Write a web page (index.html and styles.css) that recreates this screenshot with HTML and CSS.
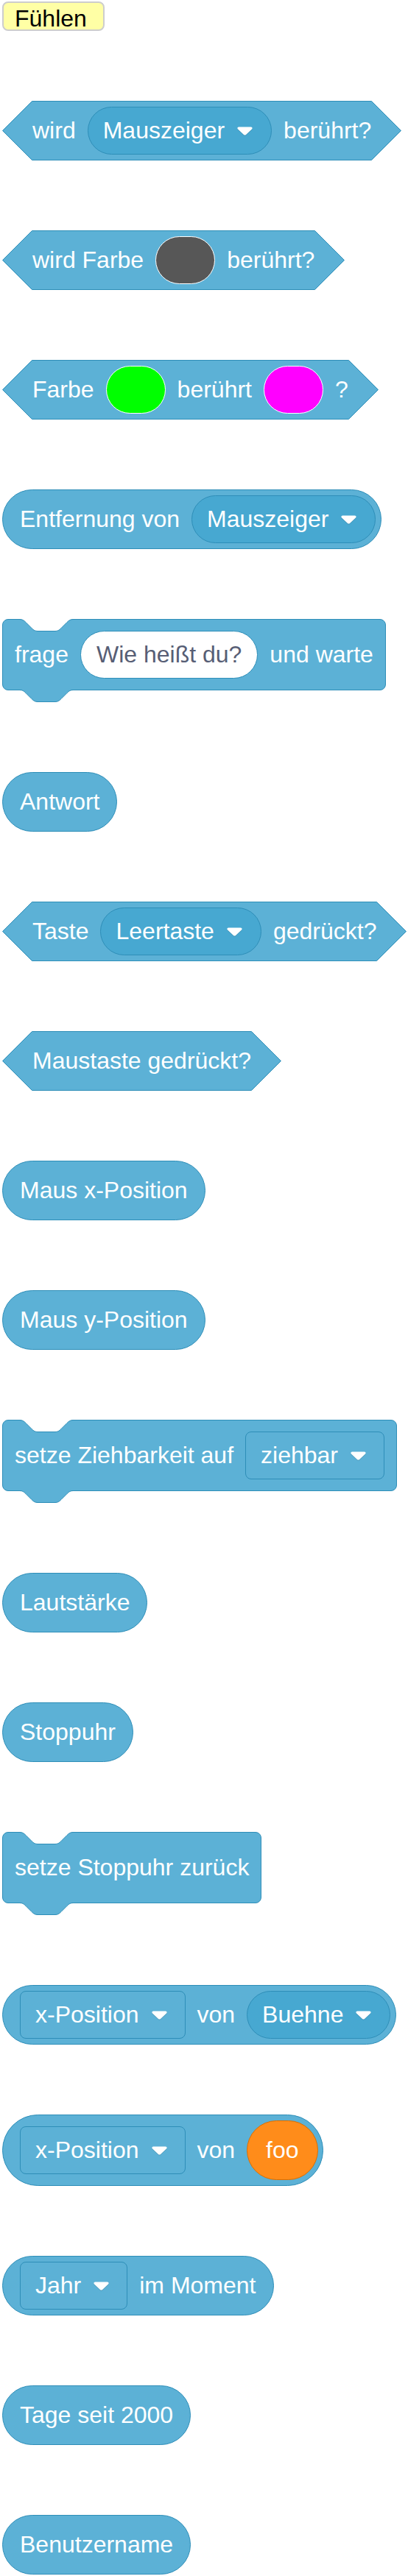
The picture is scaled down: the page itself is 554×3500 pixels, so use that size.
FILE: index.html
```html
<!DOCTYPE html>
<html lang="de">
<head>
<meta charset="utf-8">
<title>Fühlen</title>
<link rel="stylesheet" href="styles.css">
</head>
<body>
<div class="page">
  <div class="label">Fühlen</div>

  <!-- wird (Mauszeiger) berührt? -->
  <div class="bool">
    <svg class="cap" viewBox="0 0 41 81"><path class="cap-fill" d="M41 0.5 H40.5 L0.5 40.5 L40.5 80.5 H41 Z"/><path class="cap-line" d="M41.5 0.5 H40.5 L0.5 40.5 L40.5 80.5 H41.5"/></svg>
    <div class="bool-body">
      <span class="t">wird</span>
      <span class="dd round"><span>Mauszeiger</span><svg class="arrow" viewBox="0 0 21 13"><path class="arrow-sh" d="M2.2 1.5 H18.8 C20.4 1.5 21.2 3.3 20 4.5 L12 12 C11.2 12.8 9.8 12.8 9 12 L1 4.5 C-0.2 3.3 0.6 1.5 2.2 1.5 Z"/><path class="arrow-fg" d="M2.2 0.5 H18.8 C20.4 0.5 21.2 2.3 20 3.5 L12 11 C11.2 11.8 9.8 11.8 9 11 L1 3.5 C-0.2 2.3 0.6 0.5 2.2 0.5 Z"/></svg></span>
      <span class="t">berührt?</span>
    </div>
    <svg class="cap" viewBox="0 0 41 81"><path class="cap-fill" d="M0 0.5 H0.5 L40.5 40.5 L0.5 80.5 H0 Z"/><path class="cap-line" d="M-0.5 0.5 H0.5 L40.5 40.5 L0.5 80.5 H-0.5"/></svg>
  </div>

  <!-- wird Farbe () berührt? -->
  <div class="bool">
    <svg class="cap" viewBox="0 0 41 81"><path class="cap-fill" d="M41 0.5 H40.5 L0.5 40.5 L40.5 80.5 H41 Z"/><path class="cap-line" d="M41.5 0.5 H40.5 L0.5 40.5 L40.5 80.5 H41.5"/></svg>
    <div class="bool-body">
      <span class="t">wird Farbe</span>
      <span class="swatch sw-gray"></span>
      <span class="t">berührt?</span>
    </div>
    <svg class="cap" viewBox="0 0 41 81"><path class="cap-fill" d="M0 0.5 H0.5 L40.5 40.5 L0.5 80.5 H0 Z"/><path class="cap-line" d="M-0.5 0.5 H0.5 L40.5 40.5 L0.5 80.5 H-0.5"/></svg>
  </div>

  <!-- Farbe () berührt () ? -->
  <div class="bool">
    <svg class="cap" viewBox="0 0 41 81"><path class="cap-fill" d="M41 0.5 H40.5 L0.5 40.5 L40.5 80.5 H41 Z"/><path class="cap-line" d="M41.5 0.5 H40.5 L0.5 40.5 L40.5 80.5 H41.5"/></svg>
    <div class="bool-body">
      <span class="t">Farbe</span>
      <span class="swatch sw-green"></span>
      <span class="t">berührt</span>
      <span class="swatch sw-magenta"></span>
      <span class="t">?</span>
    </div>
    <svg class="cap" viewBox="0 0 41 81"><path class="cap-fill" d="M0 0.5 H0.5 L40.5 40.5 L0.5 80.5 H0 Z"/><path class="cap-line" d="M-0.5 0.5 H0.5 L40.5 40.5 L0.5 80.5 H-0.5"/></svg>
  </div>

  <!-- Entfernung von (Mauszeiger) -->
  <div class="rep end-round">
    <span class="t">Entfernung von</span>
    <span class="dd round"><span>Mauszeiger</span><svg class="arrow" viewBox="0 0 21 13"><path class="arrow-sh" d="M2.2 1.5 H18.8 C20.4 1.5 21.2 3.3 20 4.5 L12 12 C11.2 12.8 9.8 12.8 9 12 L1 4.5 C-0.2 3.3 0.6 1.5 2.2 1.5 Z"/><path class="arrow-fg" d="M2.2 0.5 H18.8 C20.4 0.5 21.2 2.3 20 3.5 L12 11 C11.2 11.8 9.8 11.8 9 11 L1 3.5 C-0.2 2.3 0.6 0.5 2.2 0.5 Z"/></svg></span>
  </div>

  <!-- frage [Wie heißt du?] und warte -->
  <div class="stack">
    <svg class="notch" width="100" height="20"><path class="notch-fill" d="M24 -1 V0.5 C28 0.5 30 2.5 32 4.5 L40 12.5 C42 14.5 44 16.5 48 16.5 H72 C76 16.5 78 14.5 80 12.5 L88 4.5 C90 2.5 92 0.5 96 0.5 V-1 Z"/><path class="line" d="M23 0.5 H24 C28 0.5 30 2.5 32 4.5 L40 12.5 C42 14.5 44 16.5 48 16.5 H72 C76 16.5 78 14.5 80 12.5 L88 4.5 C90 2.5 92 0.5 96 0.5 H97"/></svg>
    <span class="t">frage</span>
    <span class="text-in">Wie heißt du?</span>
    <span class="t">und warte</span>
    <svg class="tab" width="100" height="18"><path class="tab-fill" d="M96 1 V1.5 C92 1.5 90 3.5 88 5.5 L80 13.5 C78 15.5 76 17.5 72 17.5 H48 C44 17.5 42 15.5 40 13.5 L32 5.5 C30 3.5 28 1.5 24 1.5 V1 Z"/><path class="line" d="M97 1.5 H96 C92 1.5 90 3.5 88 5.5 L80 13.5 C78 15.5 76 17.5 72 17.5 H48 C44 17.5 42 15.5 40 13.5 L32 5.5 C30 3.5 28 1.5 24 1.5 H23"/></svg>
  </div>

  <div class="rep"><span class="t">Antwort</span></div>

  <!-- Taste (Leertaste) gedrückt? -->
  <div class="bool">
    <svg class="cap" viewBox="0 0 41 81"><path class="cap-fill" d="M41 0.5 H40.5 L0.5 40.5 L40.5 80.5 H41 Z"/><path class="cap-line" d="M41.5 0.5 H40.5 L0.5 40.5 L40.5 80.5 H41.5"/></svg>
    <div class="bool-body">
      <span class="t">Taste</span>
      <span class="dd round"><span>Leertaste</span><svg class="arrow" viewBox="0 0 21 13"><path class="arrow-sh" d="M2.2 1.5 H18.8 C20.4 1.5 21.2 3.3 20 4.5 L12 12 C11.2 12.8 9.8 12.8 9 12 L1 4.5 C-0.2 3.3 0.6 1.5 2.2 1.5 Z"/><path class="arrow-fg" d="M2.2 0.5 H18.8 C20.4 0.5 21.2 2.3 20 3.5 L12 11 C11.2 11.8 9.8 11.8 9 11 L1 3.5 C-0.2 2.3 0.6 0.5 2.2 0.5 Z"/></svg></span>
      <span class="t">gedrückt?</span>
    </div>
    <svg class="cap" viewBox="0 0 41 81"><path class="cap-fill" d="M0 0.5 H0.5 L40.5 40.5 L0.5 80.5 H0 Z"/><path class="cap-line" d="M-0.5 0.5 H0.5 L40.5 40.5 L0.5 80.5 H-0.5"/></svg>
  </div>

  <!-- Maustaste gedrückt? -->
  <div class="bool">
    <svg class="cap" viewBox="0 0 41 81"><path class="cap-fill" d="M41 0.5 H40.5 L0.5 40.5 L40.5 80.5 H41 Z"/><path class="cap-line" d="M41.5 0.5 H40.5 L0.5 40.5 L40.5 80.5 H41.5"/></svg>
    <div class="bool-body">
      <span class="t">Maustaste gedrückt?</span>
    </div>
    <svg class="cap" viewBox="0 0 41 81"><path class="cap-fill" d="M0 0.5 H0.5 L40.5 40.5 L0.5 80.5 H0 Z"/><path class="cap-line" d="M-0.5 0.5 H0.5 L40.5 40.5 L0.5 80.5 H-0.5"/></svg>
  </div>

  <div class="rep"><span class="t">Maus x-Position</span></div>
  <div class="rep"><span class="t">Maus y-Position</span></div>

  <!-- setze Ziehbarkeit auf [ziehbar] -->
  <div class="stack">
    <svg class="notch" width="100" height="20"><path class="notch-fill" d="M24 -1 V0.5 C28 0.5 30 2.5 32 4.5 L40 12.5 C42 14.5 44 16.5 48 16.5 H72 C76 16.5 78 14.5 80 12.5 L88 4.5 C90 2.5 92 0.5 96 0.5 V-1 Z"/><path class="line" d="M23 0.5 H24 C28 0.5 30 2.5 32 4.5 L40 12.5 C42 14.5 44 16.5 48 16.5 H72 C76 16.5 78 14.5 80 12.5 L88 4.5 C90 2.5 92 0.5 96 0.5 H97"/></svg>
    <span class="t">setze Ziehbarkeit auf</span>
    <span class="dd square"><span>ziehbar</span><svg class="arrow" viewBox="0 0 21 13"><path class="arrow-sh" d="M2.2 1.5 H18.8 C20.4 1.5 21.2 3.3 20 4.5 L12 12 C11.2 12.8 9.8 12.8 9 12 L1 4.5 C-0.2 3.3 0.6 1.5 2.2 1.5 Z"/><path class="arrow-fg" d="M2.2 0.5 H18.8 C20.4 0.5 21.2 2.3 20 3.5 L12 11 C11.2 11.8 9.8 11.8 9 11 L1 3.5 C-0.2 2.3 0.6 0.5 2.2 0.5 Z"/></svg></span>
    <svg class="tab" width="100" height="18"><path class="tab-fill" d="M96 1 V1.5 C92 1.5 90 3.5 88 5.5 L80 13.5 C78 15.5 76 17.5 72 17.5 H48 C44 17.5 42 15.5 40 13.5 L32 5.5 C30 3.5 28 1.5 24 1.5 V1 Z"/><path class="line" d="M97 1.5 H96 C92 1.5 90 3.5 88 5.5 L80 13.5 C78 15.5 76 17.5 72 17.5 H48 C44 17.5 42 15.5 40 13.5 L32 5.5 C30 3.5 28 1.5 24 1.5 H23"/></svg>
  </div>

  <div class="rep"><span class="t">Lautstärke</span></div>
  <div class="rep"><span class="t">Stoppuhr</span></div>

  <!-- setze Stoppuhr zurück -->
  <div class="stack">
    <svg class="notch" width="100" height="20"><path class="notch-fill" d="M24 -1 V0.5 C28 0.5 30 2.5 32 4.5 L40 12.5 C42 14.5 44 16.5 48 16.5 H72 C76 16.5 78 14.5 80 12.5 L88 4.5 C90 2.5 92 0.5 96 0.5 V-1 Z"/><path class="line" d="M23 0.5 H24 C28 0.5 30 2.5 32 4.5 L40 12.5 C42 14.5 44 16.5 48 16.5 H72 C76 16.5 78 14.5 80 12.5 L88 4.5 C90 2.5 92 0.5 96 0.5 H97"/></svg>
    <span class="t">setze Stoppuhr zurück</span>
    <svg class="tab" width="100" height="18"><path class="tab-fill" d="M96 1 V1.5 C92 1.5 90 3.5 88 5.5 L80 13.5 C78 15.5 76 17.5 72 17.5 H48 C44 17.5 42 15.5 40 13.5 L32 5.5 C30 3.5 28 1.5 24 1.5 V1 Z"/><path class="line" d="M97 1.5 H96 C92 1.5 90 3.5 88 5.5 L80 13.5 C78 15.5 76 17.5 72 17.5 H48 C44 17.5 42 15.5 40 13.5 L32 5.5 C30 3.5 28 1.5 24 1.5 H23"/></svg>
  </div>

  <!-- [x-Position] von (Buehne) -->
  <div class="rep end-round">
    <span class="dd square"><span>x-Position</span><svg class="arrow" viewBox="0 0 21 13"><path class="arrow-sh" d="M2.2 1.5 H18.8 C20.4 1.5 21.2 3.3 20 4.5 L12 12 C11.2 12.8 9.8 12.8 9 12 L1 4.5 C-0.2 3.3 0.6 1.5 2.2 1.5 Z"/><path class="arrow-fg" d="M2.2 0.5 H18.8 C20.4 0.5 21.2 2.3 20 3.5 L12 11 C11.2 11.8 9.8 11.8 9 11 L1 3.5 C-0.2 2.3 0.6 0.5 2.2 0.5 Z"/></svg></span>
    <span class="t">von</span>
    <span class="dd round"><span>Buehne</span><svg class="arrow" viewBox="0 0 21 13"><path class="arrow-sh" d="M2.2 1.5 H18.8 C20.4 1.5 21.2 3.3 20 4.5 L12 12 C11.2 12.8 9.8 12.8 9 12 L1 4.5 C-0.2 3.3 0.6 1.5 2.2 1.5 Z"/><path class="arrow-fg" d="M2.2 0.5 H18.8 C20.4 0.5 21.2 2.3 20 3.5 L12 11 C11.2 11.8 9.8 11.8 9 11 L1 3.5 C-0.2 2.3 0.6 0.5 2.2 0.5 Z"/></svg></span>
  </div>

  <!-- [x-Position] von (foo) -->
  <div class="rep end-round end-var">
    <span class="dd square"><span>x-Position</span><svg class="arrow" viewBox="0 0 21 13"><path class="arrow-sh" d="M2.2 1.5 H18.8 C20.4 1.5 21.2 3.3 20 4.5 L12 12 C11.2 12.8 9.8 12.8 9 12 L1 4.5 C-0.2 3.3 0.6 1.5 2.2 1.5 Z"/><path class="arrow-fg" d="M2.2 0.5 H18.8 C20.4 0.5 21.2 2.3 20 3.5 L12 11 C11.2 11.8 9.8 11.8 9 11 L1 3.5 C-0.2 2.3 0.6 0.5 2.2 0.5 Z"/></svg></span>
    <span class="t">von</span>
    <span class="var"><span class="t">foo</span></span>
  </div>

  <!-- [Jahr] im Moment -->
  <div class="rep">
    <span class="dd square"><span>Jahr</span><svg class="arrow" viewBox="0 0 21 13"><path class="arrow-sh" d="M2.2 1.5 H18.8 C20.4 1.5 21.2 3.3 20 4.5 L12 12 C11.2 12.8 9.8 12.8 9 12 L1 4.5 C-0.2 3.3 0.6 1.5 2.2 1.5 Z"/><path class="arrow-fg" d="M2.2 0.5 H18.8 C20.4 0.5 21.2 2.3 20 3.5 L12 11 C11.2 11.8 9.8 11.8 9 11 L1 3.5 C-0.2 2.3 0.6 0.5 2.2 0.5 Z"/></svg></span>
    <span class="t">im Moment</span>
  </div>

  <div class="rep"><span class="t">Tage seit 2000</span></div>
  <div class="rep"><span class="t">Benutzername</span></div>
</div>
</body>
</html>
```

FILE: styles.css
```css
* {
  box-sizing: border-box;
}

html,
body {
  margin: 0;
  padding: 0;
  background: #ffffff;
}

body {
  font-family: "Liberation Sans", Arial, Helvetica, sans-serif;
  font-size: 32px;
  color: #ffffff;
}

.page {
  display: flex;
  flex-direction: column;
  align-items: flex-start;
  gap: 95px;
  padding: 2px 0 0 3px;
}

/* category label */
.label {
  height: 40px;
  width: 139px;
  padding: 4px 0 0 15px;
  line-height: 34px;
  color: #000000;
  background: #ffffa5;
  border: 2px solid #cdcdcd;
  border-radius: 8px;
}

.t {
  white-space: nowrap;
  line-height: 1.15;
}

/* reporter (round) blocks */
.rep {
  display: flex;
  align-items: center;
  gap: 16px;
  min-height: 81px;
  padding: 7px 23px;
  background: #5cb1d6;
  border: 1px solid #2e8eb8;
  border-radius: 999px;
}

.rep.end-round {
  padding-right: 7px;
}

.rep.end-var {
  padding-right: 6px;
}

/* boolean (hexagon) blocks */
.bool {
  display: flex;
  height: 81px;
}

.cap {
  display: block;
  width: 41px;
  height: 81px;
  overflow: visible;
  flex: none;
}

.cap-fill {
  fill: #5cb1d6;
}

.cap-line {
  fill: none;
  stroke: #2e8eb8;
  stroke-width: 1;
}

.bool-body {
  display: flex;
  align-items: center;
  gap: 16px;
  height: 81px;
  background: #5cb1d6;
  border-top: 1px solid #2e8eb8;
  border-bottom: 1px solid #2e8eb8;
}

/* stack blocks */
.stack {
  position: relative;
  display: flex;
  align-items: center;
  gap: 16px;
  min-height: 97px;
  padding: 0 16px;
  margin-bottom: 16px;
  background: #5cb1d6;
  border: 1px solid #2e8eb8;
  border-radius: 8px;
}

.notch {
  position: absolute;
  left: -1px;
  top: -1px;
  overflow: visible;
}

.tab {
  position: absolute;
  left: -1px;
  bottom: -17px;
  overflow: visible;
}

.notch-fill {
  fill: #ffffff;
}

.tab-fill {
  fill: #5cb1d6;
}

.line {
  fill: none;
  stroke: #2e8eb8;
  stroke-width: 1;
}

/* dropdown menus */
.dd {
  display: flex;
  align-items: center;
  height: 65px;
  padding: 0 24px 0 20px;
  border: 1px solid #2e8eb8;
  white-space: nowrap;
  line-height: 1.15;
  flex: none;
}

.dd.round {
  background: #47a8d1;
  border-radius: 32.5px;
  padding-right: 25px;
}

.dd.square {
  background: #5cb1d6;
  border-radius: 8px;
}

.arrow {
  display: block;
  width: 21px;
  height: 13px;
  margin-left: 17px;
  margin-top: 2px;
  flex: none;
}

.arrow-sh {
  fill: rgba(0, 0, 0, 0.12);
}

.arrow-fg {
  fill: #ffffff;
}

/* text input */
.text-in {
  display: flex;
  align-items: center;
  height: 65px;
  padding: 0 21px;
  background: #ffffff;
  border: 1px solid #2e8eb8;
  border-radius: 32.5px;
  color: #575e75;
  white-space: nowrap;
  line-height: 1.15;
  flex: none;
}

/* colour swatches */
.swatch {
  display: block;
  width: 81px;
  height: 65px;
  border: 1px solid #ffffff;
  border-radius: 32.5px;
  flex: none;
}

.sw-gray {
  background: #575757;
}

.sw-green {
  background: #00ff00;
}

.sw-magenta {
  background: #ff00ff;
}

/* variable reporter */
.var {
  display: flex;
  align-items: center;
  height: 81px;
  padding: 0 25px;
  background: #ff8c1a;
  border: 1px solid #db6e00;
  border-radius: 40.5px;
  flex: none;
}
```
